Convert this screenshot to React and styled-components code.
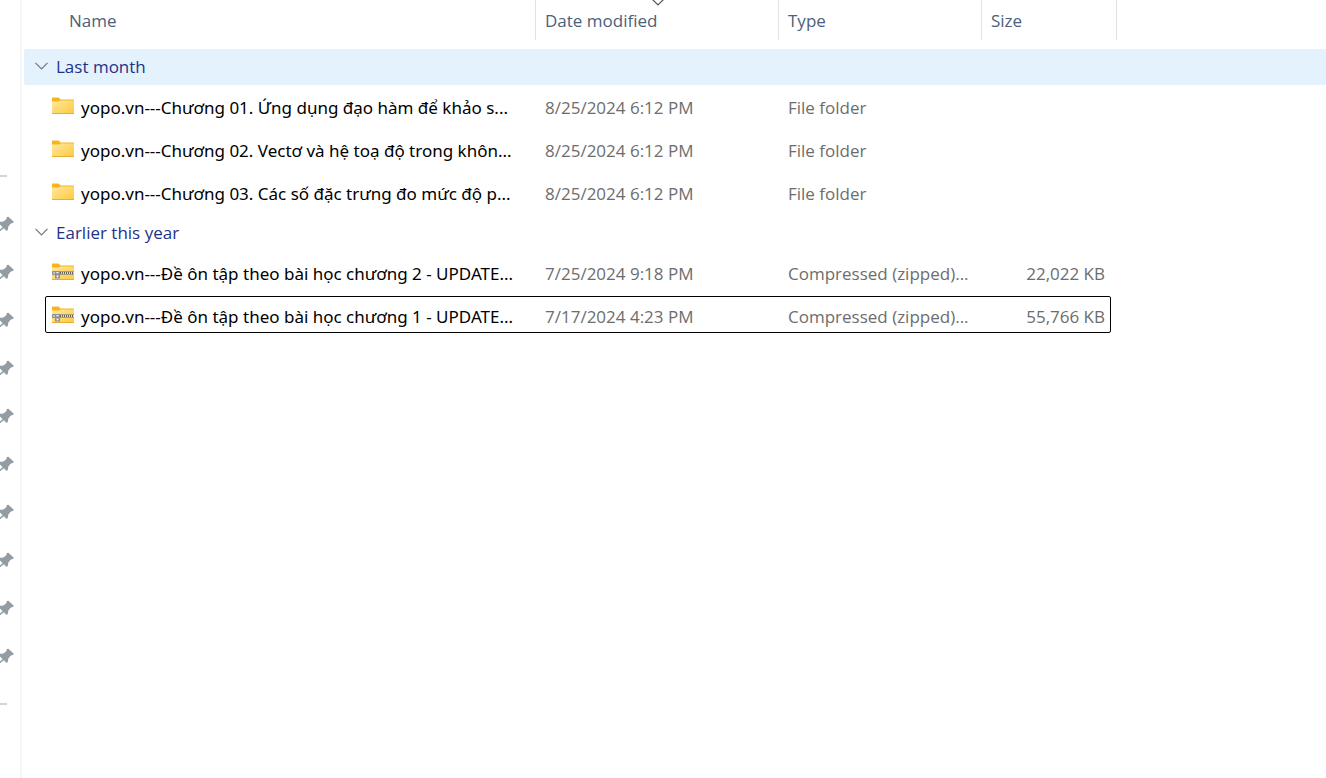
import React from "react";
import styled, { createGlobalStyle } from "styled-components";

const GlobalStyle = createGlobalStyle`
  *, *::before, *::after { box-sizing: border-box; }
  body {
    margin: 0;
    background: #fff;
    font-family: "Open Sans", "Noto Sans", sans-serif;
    font-size: 17px;
    line-height: 24px;
  }
`;

const Window = styled.div`
  display: flex;
  min-height: 100vh;
`;

const Sidebar = styled.aside`
  flex: none;
  width: 22px;
  padding-top: 152px;
  border-right: 2px solid #f6f6f6;
`;

const SidebarSlot = styled.div`
  display: flex;
  align-items: center;
  height: 48px;
`;

const Divider = styled.hr`
  width: 7px;
  height: 2px;
  margin: 0;
  border: 0;
  background: #d3d5d7;
`;

const Content = styled.main`
  flex: 1;
  min-width: 0;
  padding-left: 2px;
`;

const FileTable = styled.table`
  width: 100%;
  table-layout: fixed;
  border-collapse: separate;
  border-spacing: 0;
`;

const Column = styled.col`
  width: ${(p) => p.$width || "auto"};
`;

const HeaderCell = styled.th`
  position: relative;
  height: 49px;
  padding: 0 0 9px;
  text-align: left;
  vertical-align: top;
`;

const HeaderButton = styled.button`
  display: block;
  width: 100%;
  height: 40px;
  padding: 2px 9px 0 ${(p) => (p.$first ? 45 : 9)}px;
  border: 0;
  border-right: 1px solid #e2e2e2;
  background: none;
  color: #4c607a;
  font: inherit;
  font-weight: 400;
  text-align: left;
`;

const SortMark = styled.svg`
  position: absolute;
  top: 0;
  left: 50%;
  margin-left: -6px;
`;

const Group = styled.tbody`
  & + & th {
    height: 37px;
    border-top: 1px solid transparent;
  }
`;

const GroupCell = styled.th`
  height: 36px;
  padding: 0;
  border-radius: 2px 0 0 2px;
  background: ${(p) => (p.$active ? "#e4f2fe" : "transparent")};
  text-align: left;
`;

const GroupButton = styled.button`
  display: flex;
  align-items: center;
  gap: 8px;
  padding: 0 11px;
  border: 0;
  background: none;
  color: #1e3287;
  font: inherit;
  font-weight: 400;
`;

const ChevronIcon = styled.svg`
  display: block;
  margin-bottom: 3px;
`;

const Cell = styled.td`
  height: 43px;
  padding: 2px ${(p) => (p.$end ? 12 : 9)}px 0 9px;
  color: #6d6d6d;
  text-align: ${(p) => (p.$end ? "right" : "left")};
  white-space: nowrap;
`;

const NameCell = styled(Cell)`
  position: relative;
  padding-left: 28px;
  padding-right: 0;
  color: #000;
  ${(p) =>
    p.$focused &&
    `&::after {
      content: "";
      position: absolute;
      left: 21px;
      top: 2px;
      width: 1066px;
      height: 37px;
      border: 1px solid #000;
      border-radius: 2px;
    }`}
`;

const FileName = styled.div`
  display: flex;
  align-items: center;
  gap: 6px;
  font-family: "Noto Sans", "Open Sans", sans-serif;
`;

const IconBox = styled.svg`
  flex: none;
  display: block;
  margin-bottom: 4px;
`;

function PinIcon() {
  return (
    <svg width="14" height="16" viewBox="0 0 14 16" aria-hidden="true">
      <path
        d="M6.8 1 8.4.8 13.6 5.6 13.2 7 10.8 7.6 8.4 10.6 7.6 14.4 6.3 14.7 3.8 12.2 0 15.2V13.4L2.6 11 0 8.6V5.8L3.4 5.4 6.3 3.2Z"
        fill="#929ca3"
      />
    </svg>
  );
}

function Chevron() {
  return (
    <ChevronIcon width="13" height="8" viewBox="0 0 13 8" aria-hidden="true">
      <path d="M.5.8 6.5 6.8 12.5.8" fill="none" stroke="#777" strokeWidth="1.2" />
    </ChevronIcon>
  );
}

function FileIcon({ zipped }) {
  return (
    <IconBox width="23" height="18" viewBox="0 0 23 18" aria-hidden="true">
      <defs>
        <linearGradient id="folderBody" x1="0" y1="0" x2="1" y2="1">
          <stop offset="0" stopColor="#ffe8a0" />
          <stop offset="1" stopColor="#ffc93c" />
        </linearGradient>
      </defs>
      <path d="M0 1.4Q0 .6.8.6H6.6L8.6 2.4H21.4Q22 2.4 22 3V8H0Z" fill="#f6b51e" />
      <path d="M0 4.4H7L8.6 3.4H22V16.2Q22 17 21.2 17H.8Q0 17 0 16.2Z" fill="url(#folderBody)" />
      <path d="M0 16.5H22" stroke="#e9ad35" />
      {zipped && (
        <g>
          <path d="M7 8H22V12H7Z" fill="#e8dcb4" />
          <path d="M7 8.5H22M7 11.5H22" stroke="#aaa083" />
          <path d="M8 10H22" stroke="#66635a" strokeWidth="2" strokeDasharray="1 1" />
          <path d="M0 9Q0 8 1 8H7Q8 8 8 9V15.6H3V12H1Q0 12 0 11Z" fill="#8b9196" />
          <path d="M1 10H3M4.4 9.6H6.6" stroke="#f2f4f5" strokeWidth="1.2" />
          <path d="M4.6 12.4H6.4V14.4H4.6Z" fill="#f2f4f5" />
        </g>
      )}
    </IconBox>
  );
}

const columns = [
  { label: "Name", width: "512px" },
  { label: "Date modified", width: "243px", sorted: true },
  { label: "Type", width: "203px" },
  { label: "Size", width: "135px" },
];

const groups = [
  {
    label: "Last month",
    active: true,
    files: [
      { name: "yopo.vn---Chương 01. Ứng dụng đạo hàm để khảo s...", date: "8/25/2024 6:12 PM", type: "File folder" },
      { name: "yopo.vn---Chương 02. Vectơ và hệ toạ độ trong khôn...", date: "8/25/2024 6:12 PM", type: "File folder" },
      { name: "yopo.vn---Chương 03. Các số đặc trưng đo mức độ p...", date: "8/25/2024 6:12 PM", type: "File folder" },
    ],
  },
  {
    label: "Earlier this year",
    files: [
      {
        name: "yopo.vn---Đề ôn tập theo bài học chương 2 - UPDATE...",
        date: "7/25/2024 9:18 PM",
        type: "Compressed (zipped)...",
        size: "22,022 KB",
        zipped: true,
      },
      {
        name: "yopo.vn---Đề ôn tập theo bài học chương 1 - UPDATE...",
        date: "7/17/2024 4:23 PM",
        type: "Compressed (zipped)...",
        size: "55,766 KB",
        zipped: true,
        focused: true,
      },
    ],
  },
];

const pins = Array.from({ length: 10 }, (_, i) => i);

export default function App() {
  return (
    <Window>
      <GlobalStyle />
      <Sidebar>
        <SidebarSlot><Divider /></SidebarSlot>
        {pins.map((i) => (
          <SidebarSlot key={i}><PinIcon /></SidebarSlot>
        ))}
        <SidebarSlot><Divider /></SidebarSlot>
      </Sidebar>
      <Content>
        <FileTable>
          <colgroup>
            {columns.map((c) => <Column key={c.label} $width={c.width} />)}
            <Column />
          </colgroup>
          <thead>
            <tr>
              {columns.map((c, i) => (
                <HeaderCell key={c.label} scope="col" aria-sort={c.sorted ? "descending" : undefined}>
                  {c.sorted && (
                    <SortMark width="12" height="6" viewBox="0 0 12 6" aria-hidden="true">
                      <path d="M.5-.5 6 5 11.5-.5" fill="none" stroke="#555" strokeWidth="1.2" />
                    </SortMark>
                  )}
                  <HeaderButton type="button" $first={i === 0}>{c.label}</HeaderButton>
                </HeaderCell>
              ))}
              <td />
            </tr>
          </thead>
          {groups.map((g) => (
            <Group key={g.label}>
              <tr>
                <GroupCell colSpan={5} scope="rowgroup" $active={g.active}>
                  <GroupButton type="button" aria-expanded="true">
                    <Chevron />
                    {g.label}
                  </GroupButton>
                </GroupCell>
              </tr>
              {g.files.map((f) => (
                <tr key={f.name}>
                  <NameCell $focused={f.focused}>
                    <FileName>
                      <FileIcon zipped={f.zipped} />
                      <span>{f.name}</span>
                    </FileName>
                  </NameCell>
                  <Cell>{f.date}</Cell>
                  <Cell>{f.type}</Cell>
                  <Cell $end>{f.size}</Cell>
                  <td />
                </tr>
              ))}
            </Group>
          ))}
        </FileTable>
      </Content>
    </Window>
  );
}
